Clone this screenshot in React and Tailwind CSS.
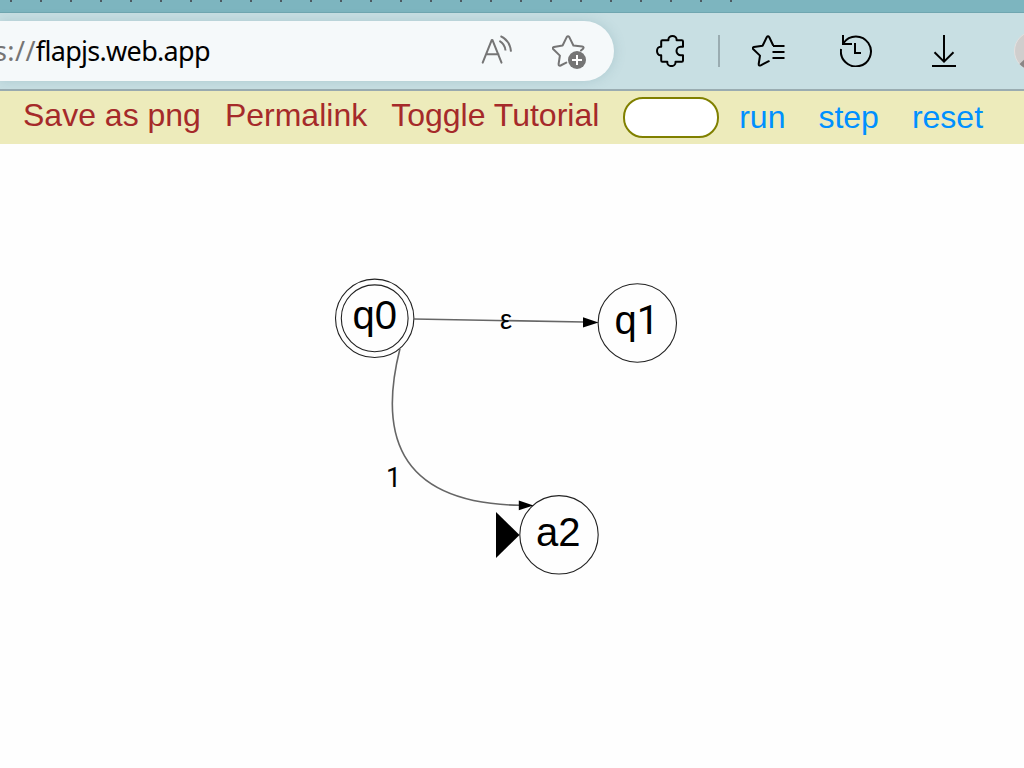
import React from "react";

const ticks = Array.from({ length: 25 }, (_, i) => i);

function ReadAloudIcon() {
  return (
    <svg className="h-8 w-8 shrink-0" viewBox="0 0 32 32" fill="none" stroke="#757575" strokeWidth="2">
      <path d="M1.7 27.6 10.800 4.900h.6l9.100 22.700M5 19.300h12.500" strokeLinejoin="round" strokeLinecap="round" />
      <path d="M18.400 5.800q5.600 3.200 6.100 9.700M19.500 1.100q9.400 4.200 10.500 15.500" />
    </svg>
  );
}

function AddFavoriteIcon() {
  return (
    <svg className="h-[35px] w-[35px] shrink-0" viewBox="0 0 35 35" fill="none">
      <path
        d="M29 15.500 31.100 13.800Q32.400 11.900 30.200 11.500L21.400 10.500 17.300 2.100Q16 .300 14.700 2.100L10.600 10.500 1.900 11.900Q.200 12.400 1.100 14L7.900 20.600 6.600 29Q6.600 31.300 8.600 30.500L14.300 27.600"
        stroke="#757575"
        strokeWidth="2"
        strokeLinejoin="round"
        strokeLinecap="round"
      />
      <circle cx="25" cy="25" r="9" fill="#757575" />
      <path d="M25 20v10M20 25h10" stroke="white" strokeWidth="2" />
    </svg>
  );
}

function PuzzleIcon() {
  return (
    <svg className="h-8 w-[30px] shrink-0" viewBox="0 0 30 32" fill="none" stroke="black" strokeWidth="2" strokeLinejoin="round">
      <path d="M6.400 5.300h6V4.600a4.100 3.600 0 0 1 8.200 0v.7h5.200q1.200 0 1.200 1.200v5.200h-2.200a4.300 4.300 0 0 0 0 8.600H27v5.300q0 1.200-1.200 1.200h-6.300v.7a4.100 3.600 0 0 1-8.200 0v-.7H6.400q-1.200 0-1.200-1.200v-5.300H4.500a3.500 4.300 0 0 1 0-8.600h.7V6.500q0-1.200 1.200-1.200z" />
    </svg>
  );
}

function FavoritesIcon() {
  return (
    <svg className="h-8 w-[33px] shrink-0" viewBox="0 0 33 32" fill="none" stroke="black" strokeWidth="2">
      <path
        d="M21 10 17.300 2.300Q16 .300 14.700 2.300L10.600 10.700 1.900 12Q.300 12.500 1.100 14L8 20.600 6.700 29Q6.700 31.200 8.700 30.400L16.800 26.200"
        strokeLinejoin="round"
        strokeLinecap="round"
      />
      <path d="M21 11h11.500M20.500 17h12M20.500 23h12" />
    </svg>
  );
}

function HistoryIcon() {
  return (
    <svg className="h-8 w-8 shrink-0" viewBox="0 0 32 32" fill="none" stroke="black" strokeWidth="2">
      <path d="M1.100 14A15 15 0 1 0 3.500 8" />
      <path d="M3 0v9h9M15 8v10h6" />
    </svg>
  );
}

function DownloadIcon() {
  return (
    <svg className="h-8 w-6 shrink-0" viewBox="0 0 24 32" fill="none" stroke="black" strokeWidth="2">
      <path d="M12 0v26.500M2.500 17.300l9.500 9.400 9.500-9.400M0 31h24" />
    </svg>
  );
}

function Automaton() {
  return (
    <svg className="block h-[624px] w-[1024px]" viewBox="0 144 1024 624" fontFamily='"Liberation Sans", Arial, sans-serif'>
      <g fill="none" stroke="#222" strokeWidth="1.1">
        <circle cx="374.7" cy="318.3" r="39.2" />
        <circle cx="374.7" cy="318.3" r="33.4" />
        <circle cx="637.3" cy="323" r="39.2" />
        <circle cx="559" cy="534.8" r="39.2" />
      </g>
      <g fill="none" stroke="#666" strokeWidth="1.6">
        <path d="M414 319 584 322" />
        <path d="M400 348.500C380 428 392 503 520 505.300" />
      </g>
      <path d="M583 317.200 598.500 322.500 583 327.600zM518.800 500.400 533.500 505.500 518.800 510.200z" />
      <path d="M496 512 519.500 535 496 558z" />
      <text x="352.500" y="329" fontSize="40">q0</text>
      <text x="614.500" y="334" fontSize="40">
        q<tspan fontFamily="Roboto, sans-serif">1</tspan>
      </text>
      <text x="536" y="545.500" fontSize="40">a2</text>
      <text x="500" y="328.500" fontSize="27">ε</text>
      <text x="386" y="486.500" fontSize="27" fontFamily="Roboto, sans-serif">1</text>
    </svg>
  );
}

export default function App() {
  return (
    <div className="flex h-[768px] w-[1024px] flex-col overflow-hidden bg-[#fefefe] font-['Liberation_Sans',Arial,sans-serif]">
      <div className="flex h-[13px] shrink-0 gap-7 border-b border-[#70a6b0] bg-[#7db5bf] pl-2.5">
        {ticks.map((i) => (
          <span key={i} className="h-0.5 w-0.5 shrink-0 bg-[#4c5a62]" />
        ))}
      </div>

      <div className="flex h-[78px] shrink-0 items-center border-b-2 border-[#9aacb1] bg-[#c8dfe3]">
        <div className="flex h-[60px] w-[614px] shrink-0 items-center rounded-r-full bg-[#f5f9fa] shadow-[0_0_12px_rgba(90,140,150,0.25)]">
          <div className="-ml-1.5 w-[487px] shrink-0 whitespace-pre font-['Noto_Sans','Open_Sans',sans-serif] text-[27px] leading-[60px] tracking-[-0.7px] text-black">
            <span className="tracking-[0.4px] text-[#757575]">s://</span>flapjs.web.app
          </div>
          <ReadAloudIcon />
          <div className="ml-[39px] mt-0.5 flex">
            <AddFavoriteIcon />
          </div>
        </div>
        <div className="ml-[42px] flex"><PuzzleIcon /></div>
        <div className="ml-8 h-8 w-0.5 shrink-0 bg-[#9aacb1]" />
        <div className="ml-8 flex"><FavoritesIcon /></div>
        <div className="ml-[55px] flex"><HistoryIcon /></div>
        <div className="ml-[60px] flex"><DownloadIcon /></div>
        <svg className="ml-[58px] h-10 w-10 shrink-0" viewBox="0 0 40 40">
          <circle cx="20" cy="20" r="19.500" fill="#d0cecd" stroke="#e3e0df" />
          <path d="M5.500 33 12 27h16l6 6a19 19 0 0 1-28.500 0z" fill="#8a8686" />
        </svg>
      </div>

      <div className="flex h-[53px] shrink-0 items-start bg-[#edebbb] pl-[23px] text-[32px] leading-[48px] text-[#a52a2a]">
        <span className="mr-6 whitespace-nowrap">Save as png</span>
        <span className="mr-6 whitespace-nowrap">Permalink</span>
        <span className="w-[232px] shrink-0 whitespace-nowrap">Toggle Tutorial</span>
        <input className="mt-1.5 h-[41px] w-24 shrink-0 rounded-[20px] border-2 border-[#808000] bg-white px-3 outline-none" />
        <div className="ml-5 flex gap-[33px] pt-0.5 text-[#0090ff]">
          <span>run</span>
          <span>step</span>
          <span>reset</span>
        </div>
      </div>

      <Automaton />
    </div>
  );
}
